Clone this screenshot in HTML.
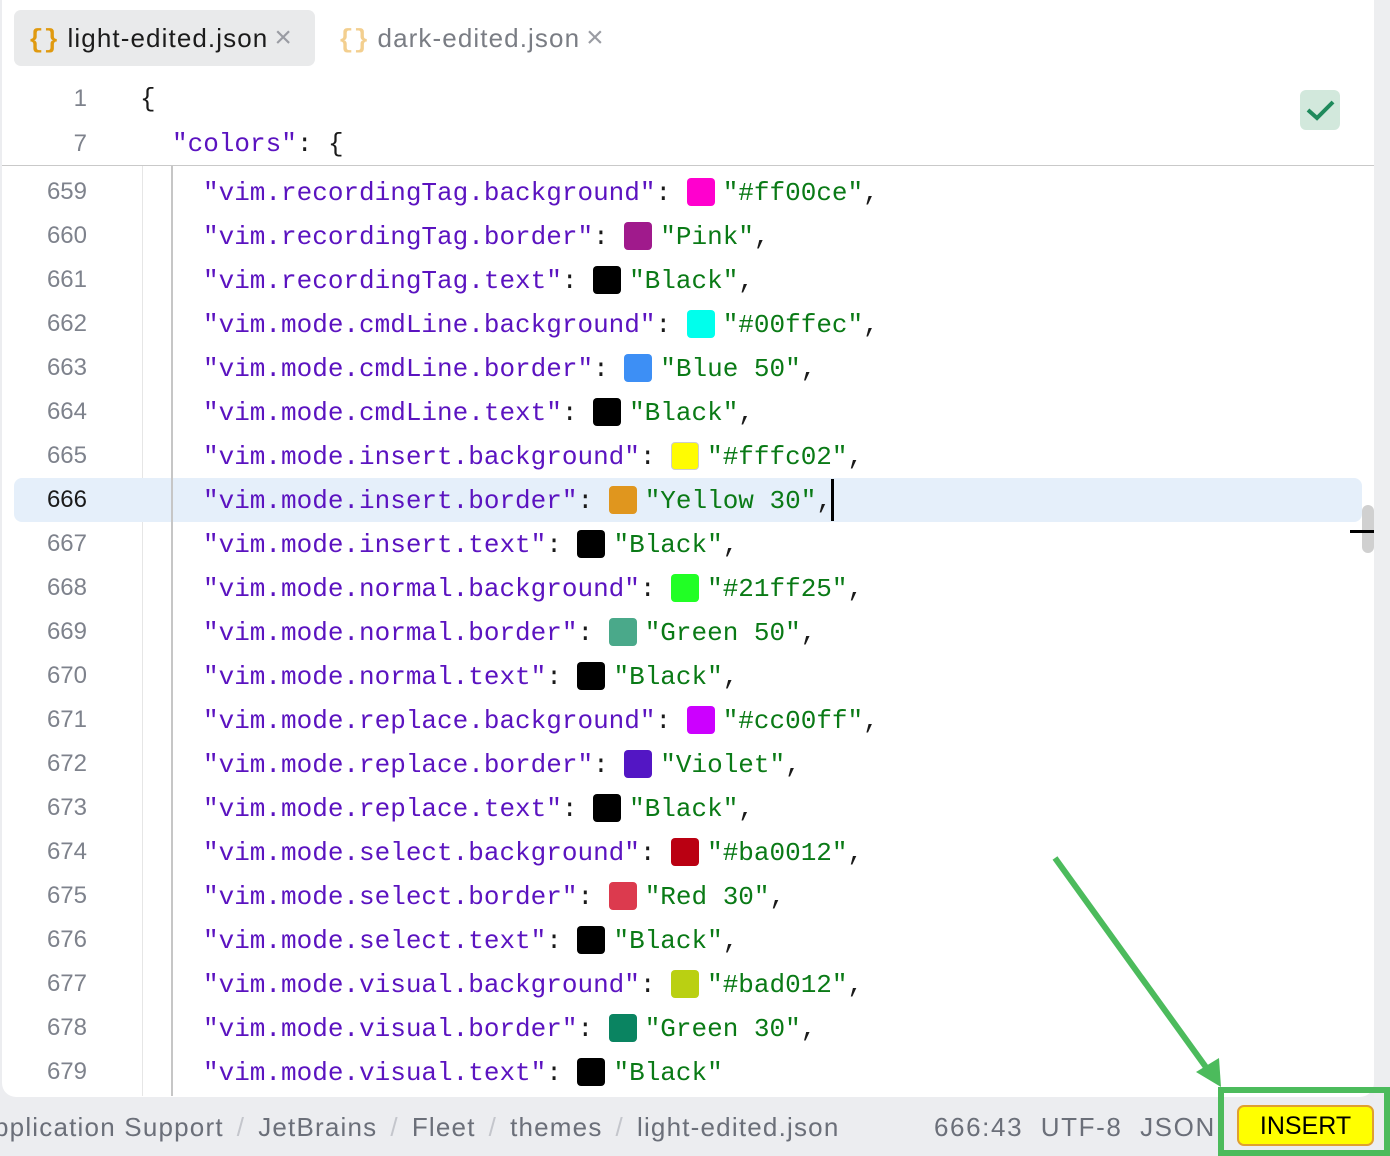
<!DOCTYPE html>
<html><head><meta charset="utf-8"><style>
*{margin:0;padding:0;box-sizing:border-box}
body{width:1390px;height:1156px;background:#ecedf0;position:relative;overflow:hidden;font-family:"Liberation Sans",sans-serif}
.panel{position:absolute;left:2px;top:0;width:1372px;height:1097px;background:#fff;border-radius:0 0 14px 14px}
.tab{position:absolute;top:10px;height:56px;font-size:26px;line-height:56px;white-space:nowrap;letter-spacing:1.1px}
.br{font-family:"Liberation Mono",monospace;font-weight:bold;letter-spacing:0}
.x{color:#9a9ca3;font-size:30px;margin-left:6px}
.ln{position:absolute;left:20px;width:67px;text-align:right;font-size:24px;color:#7e828c;line-height:44px}
.code{position:absolute;left:0;font-family:"Liberation Mono",monospace;font-size:26px;line-height:44px;white-space:pre;color:#1a1a1a}
.k{color:#5b13c0}.s{color:#0a7a16}
.sw{display:inline-block;width:28px;height:28px;border-radius:4px;vertical-align:-6px;margin-right:8px}
.sb{position:absolute;top:1098px;height:58px;line-height:58px;font-size:26px;color:#6b6f79;white-space:nowrap;letter-spacing:1.2px}
.sl{color:#c4c6cc;margin:0 13px}
</style></head><body>
<div class="panel"></div>
<div style="position:absolute;left:1374px;top:0;width:16px;height:1098px;background:#edeef0"></div>
<div class="tab" style="left:14px;width:301px;background:#e9eaeb;border-radius:7px;padding-left:14px;color:#1b1b1b"><span class="br" style="color:#e09a10">{}</span> light-edited.json<span class="x">×</span></div>
<div class="tab" style="left:338px;color:#7a7d84"><span class="br" style="color:#f3cf8f">{}</span> dark-edited.json<span class="x">×</span></div>
<div style="position:absolute;left:1300px;top:90px;width:40px;height:40px;background:#d2e8dc;border-radius:6px"><svg width="40" height="40"><path d="M8 20 L17 28 L33 12" stroke="#1f8a5c" stroke-width="4" fill="none"/></svg></div>
<div class="ln" style="top:77px">1</div><div class="code" style="top:77px;left:140px">{</div>
<div class="ln" style="top:122px">7</div><div class="code" style="top:122px;left:172px"><span class="k">"colors"</span>: {</div>
<div style="position:absolute;left:2px;top:165px;width:1372px;height:1px;background:#c9c9c9"></div>
<div style="position:absolute;left:142px;top:166px;width:1px;height:930px;background:#e6e6e6"></div>
<div style="position:absolute;left:14px;top:478px;width:1348px;height:44px;background:#e5effa;border-radius:8px"></div>
<div style="position:absolute;left:171px;top:166px;width:2px;height:930px;background:#c6c6c6"></div>
<div class="ln" style="top:170px">659</div><div class="code" style="top:171px;left:203px"><span class="k">"vim.recordingTag.background"</span>: <span class="sw" style="background:#ff00ce"></span><span class="s">"#ff00ce"</span>,</div>
<div class="ln" style="top:214px">660</div><div class="code" style="top:215px;left:203px"><span class="k">"vim.recordingTag.border"</span>: <span class="sw" style="background:#a01a8c"></span><span class="s">"Pink"</span>,</div>
<div class="ln" style="top:258px">661</div><div class="code" style="top:259px;left:203px"><span class="k">"vim.recordingTag.text"</span>: <span class="sw" style="background:#000"></span><span class="s">"Black"</span>,</div>
<div class="ln" style="top:302px">662</div><div class="code" style="top:303px;left:203px"><span class="k">"vim.mode.cmdLine.background"</span>: <span class="sw" style="background:#00ffec"></span><span class="s">"#00ffec"</span>,</div>
<div class="ln" style="top:346px">663</div><div class="code" style="top:347px;left:203px"><span class="k">"vim.mode.cmdLine.border"</span>: <span class="sw" style="background:#3d8ff5"></span><span class="s">"Blue 50"</span>,</div>
<div class="ln" style="top:390px">664</div><div class="code" style="top:391px;left:203px"><span class="k">"vim.mode.cmdLine.text"</span>: <span class="sw" style="background:#000"></span><span class="s">"Black"</span>,</div>
<div class="ln" style="top:434px">665</div><div class="code" style="top:435px;left:203px"><span class="k">"vim.mode.insert.background"</span>: <span class="sw" style="background:#fffc02;border:1px solid #ccc"></span><span class="s">"#fffc02"</span>,</div>
<div class="ln" style="top:478px;color:#1a1a1a">666</div><div class="code" style="top:479px;left:203px"><span class="k">"vim.mode.insert.border"</span>: <span class="sw" style="background:#e0961e"></span><span class="s">"Yellow 30"</span>,</div>
<div style="position:absolute;left:831px;top:479px;width:3px;height:42px;background:#000"></div>
<div class="ln" style="top:522px">667</div><div class="code" style="top:523px;left:203px"><span class="k">"vim.mode.insert.text"</span>: <span class="sw" style="background:#000"></span><span class="s">"Black"</span>,</div>
<div class="ln" style="top:566px">668</div><div class="code" style="top:567px;left:203px"><span class="k">"vim.mode.normal.background"</span>: <span class="sw" style="background:#21ff25"></span><span class="s">"#21ff25"</span>,</div>
<div class="ln" style="top:610px">669</div><div class="code" style="top:611px;left:203px"><span class="k">"vim.mode.normal.border"</span>: <span class="sw" style="background:#4aa98a"></span><span class="s">"Green 50"</span>,</div>
<div class="ln" style="top:654px">670</div><div class="code" style="top:655px;left:203px"><span class="k">"vim.mode.normal.text"</span>: <span class="sw" style="background:#000"></span><span class="s">"Black"</span>,</div>
<div class="ln" style="top:698px">671</div><div class="code" style="top:699px;left:203px"><span class="k">"vim.mode.replace.background"</span>: <span class="sw" style="background:#cc00ff"></span><span class="s">"#cc00ff"</span>,</div>
<div class="ln" style="top:742px">672</div><div class="code" style="top:743px;left:203px"><span class="k">"vim.mode.replace.border"</span>: <span class="sw" style="background:#5316c4"></span><span class="s">"Violet"</span>,</div>
<div class="ln" style="top:786px">673</div><div class="code" style="top:787px;left:203px"><span class="k">"vim.mode.replace.text"</span>: <span class="sw" style="background:#000"></span><span class="s">"Black"</span>,</div>
<div class="ln" style="top:830px">674</div><div class="code" style="top:831px;left:203px"><span class="k">"vim.mode.select.background"</span>: <span class="sw" style="background:#ba0012"></span><span class="s">"#ba0012"</span>,</div>
<div class="ln" style="top:874px">675</div><div class="code" style="top:875px;left:203px"><span class="k">"vim.mode.select.border"</span>: <span class="sw" style="background:#dc3a4e"></span><span class="s">"Red 30"</span>,</div>
<div class="ln" style="top:918px">676</div><div class="code" style="top:919px;left:203px"><span class="k">"vim.mode.select.text"</span>: <span class="sw" style="background:#000"></span><span class="s">"Black"</span>,</div>
<div class="ln" style="top:962px">677</div><div class="code" style="top:963px;left:203px"><span class="k">"vim.mode.visual.background"</span>: <span class="sw" style="background:#bad012"></span><span class="s">"#bad012"</span>,</div>
<div class="ln" style="top:1006px">678</div><div class="code" style="top:1007px;left:203px"><span class="k">"vim.mode.visual.border"</span>: <span class="sw" style="background:#0a8461"></span><span class="s">"Green 30"</span>,</div>
<div class="ln" style="top:1050px">679</div><div class="code" style="top:1051px;left:203px"><span class="k">"vim.mode.visual.text"</span>: <span class="sw" style="background:#000"></span><span class="s">"Black"</span></div>
<div style="position:absolute;left:1362px;top:505px;width:12px;height:48px;background:#d0d0d0;border-radius:6px"></div>
<div style="position:absolute;left:1350px;top:530px;width:24px;height:3px;background:#000"></div>
<div class="sb" style="left:-6px">pplication Support<span class="sl">/</span>JetBrains<span class="sl">/</span>Fleet<span class="sl">/</span>themes<span class="sl">/</span>light-edited.json</div>
<div class="sb" style="left:934px;width:284px;overflow:hidden;letter-spacing:1.6px">666:43&nbsp;&nbsp;UTF-8&nbsp;&nbsp;JSON</div>
<div style="position:absolute;left:1237px;top:1105px;width:137px;height:41px;background:#ffff00;border:2px solid #e0a030;border-radius:7px;text-align:center;line-height:39px;font-size:25px;color:#000">INSERT</div>
<div style="position:absolute;left:1218px;top:1087px;width:172px;height:69px;border:6px solid #4cbb5c"></div>
<svg style="position:absolute;left:0;top:0" width="1390" height="1156"><line x1="1055" y1="858" x2="1208" y2="1070" stroke="#4cbb5c" stroke-width="6"/><path d="M1196 1072 L1221 1087 L1219 1058 Z" fill="#4cbb5c"/></svg>
</body></html>
